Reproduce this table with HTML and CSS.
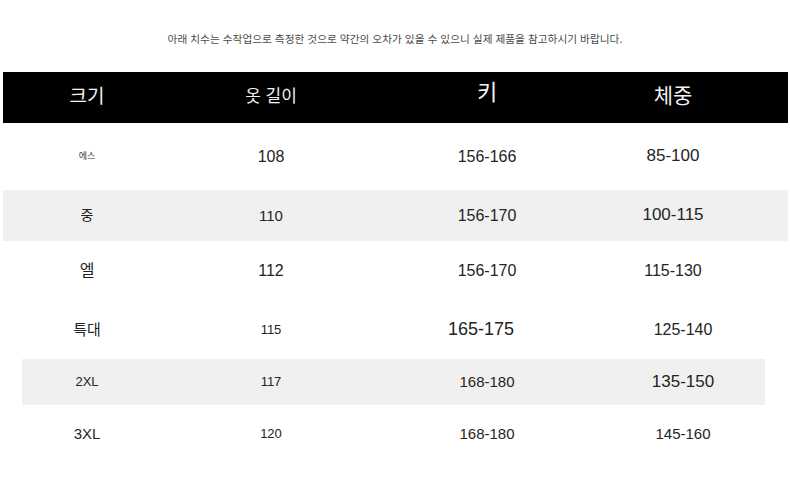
FILE: index.html
```html
<!DOCTYPE html>
<html lang="ko">
<head>
<meta charset="utf-8">
<title>사이즈 표</title>
<link rel="stylesheet" href="styles.css">
</head>
<body>
<p class="caption">아래 치수는 수작업으로 측정한 것으로 약간의 오차가 있을 수 있으니 실제 제품을 참고하시기 바랍니다.</p>
<div class="table">
  <div class="row head">
    <span class="cell f19">크기</span>
    <span class="cell f17">옷 길이</span>
    <span class="cell f22 up4">키</span>
    <span class="cell f21 up2">체중</span>
  </div>
  <div class="row r1">
    <span class="cell f9">에스</span>
    <span class="cell f16">108</span>
    <span class="cell f16">156-166</span>
    <span class="cell f17">85-100</span>
  </div>
  <div class="row r2 band">
    <span class="cell f14">중</span>
    <span class="cell f15">110</span>
    <span class="cell f16">156-170</span>
    <span class="cell f17">100-115</span>
  </div>
  <div class="row r3">
    <span class="cell f16">엘</span>
    <span class="cell f16">112</span>
    <span class="cell f16">156-170</span>
    <span class="cell f16">115-130</span>
  </div>
  <div class="row r4">
    <span class="cell f15">특대</span>
    <span class="cell f13">115</span>
    <span class="cell f18 left6">165-175</span>
    <span class="cell f16 right">125-140</span>
  </div>
  <div class="row r5 band-inset">
    <span class="cell f13">2XL</span>
    <span class="cell f13">117</span>
    <span class="cell f15">168-180</span>
    <span class="cell f17 right">135-150</span>
  </div>
  <div class="row r6">
    <span class="cell f15">3XL</span>
    <span class="cell f13">120</span>
    <span class="cell f15">168-180</span>
    <span class="cell f15 right">145-160</span>
  </div>
</div>
</body>
</html>
```

FILE: styles.css
```css
html, body {
  margin: 0;
  padding: 0;
  background: #ffffff;
}

body {
  width: 790px;
  height: 500px;
  font-family: "Liberation Sans", "Noto Sans CJK KR", Arial, sans-serif;
  color: #242424;
}

.caption {
  margin: 0;
  padding-top: 32px;
  height: 40px;
  line-height: 14px;
  font-size: 10.7px;
  color: #4a4a4a;
  text-align: center;
  font-family: "Noto Sans CJK KR", sans-serif;
}

.table {
  margin: 0 2px 0 3px;
}

.row {
  display: grid;
  grid-template-columns: 168px 200px 232px 140px 1fr;
  align-items: center;
}

.cell {
  text-align: center;
  line-height: 1.2;
}

.head {
  height: 51px;
  background: #000;
  color: #f2f2f2;
}

.r1 { height: 67px; }
.r2 { height: 51px; }
.r3 { height: 59px; }
.r4 { height: 59px; }
.r5 { height: 46px; }
.r6 { height: 57px; }

.band {
  background: #f0f0f0;
}

.band-inset {
  background: linear-gradient(#f0f0f0, #f0f0f0) no-repeat 19px 0 / calc(100% - 42px) 100%;
}

.f9 { font-size: 9px; color: #333; }
.f13 { font-size: 13px; }
.f14 { font-size: 14px; }
.f15 { font-size: 15px; }
.f16 { font-size: 16px; }
.f17 { font-size: 17px; }
.f18 { font-size: 18px; }
.f19 { font-size: 19px; }
.f21 { font-size: 21px; }
.f22 { font-size: 22px; }

.up4 { padding-bottom: 8px; }
.up2 { padding-bottom: 4px; }
.left6 { padding-right: 12px; }
.right { padding-left: 20px; }
```
